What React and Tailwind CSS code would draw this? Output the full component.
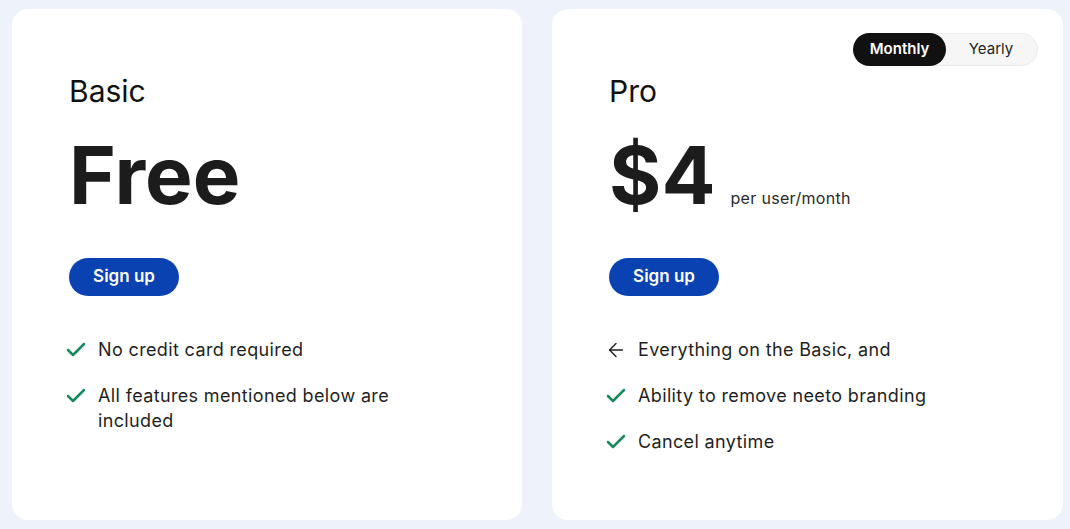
import React from 'react';
import { Check, ArrowLeft } from 'lucide-react';

const Feature = ({ icon = 'check', children }) => (
    <li className="flex items-start gap-[10px] text-[18px] leading-[25px] tracking-[0.02em] text-[#1f1f1f]">
        <span className="flex h-[25px] w-6 shrink-0 items-center justify-center">
            {icon === 'check' ? (
                <Check size={24} strokeWidth={2.5} className="text-[#168a5c]" />
            ) : (
                <ArrowLeft size={22} strokeWidth={1.5} className="text-[#1f1f1f]" />
            )}
        </span>
        <span>{children}</span>
    </li>
);

const PlanCard = ({ name, price, suffix, features, children }) => (
    <div className="relative h-[511px] rounded-2xl bg-white pl-[57px] pr-10 pt-[64px]">
        {children}
        <h2 className="text-[30px] leading-[36px] text-[#111]">{name}</h2>
        <div className="mt-[26px] flex items-baseline gap-[15px]">
            <span className="text-[80px] font-bold leading-[80px] text-[#1c1c1c]">{price}</span>
            {suffix && <span className="text-[16px] tracking-[0.02em] text-[#2a2a2a]">{suffix}</span>}
        </div>
        <button className="mt-[43px] h-[38px] w-[110px] rounded-full bg-[#0a42b2] text-[17px] font-semibold text-white">
            Sign up
        </button>
        <ul className="-ml-[5px] mt-[41px] flex flex-col gap-[21px] pr-16">
            {features.map((f, i) => (
                <Feature key={i} icon={f.icon}>{f.text}</Feature>
            ))}
        </ul>
    </div>
);

export default function App() {
    return (
        <div
            className="grid h-[529px] w-[1070px] grid-cols-[510px_511px] gap-[30px] bg-[#eef2fb] pl-3 pt-[9px]"
            style={{ fontFamily: 'Inter, "Noto Sans", sans-serif' }}
        >
            <PlanCard
                name="Basic"
                price="Free"
                features={[
                    { text: 'No credit card required' },
                    { text: 'All features mentioned below are included' },
                ]}
            />
            <PlanCard
                name="Pro"
                price="$4"
                suffix="per user/month"
                features={[
                    { icon: 'arrow', text: 'Everything on the Basic, and' },
                    { text: 'Ability to remove neeto branding' },
                    { text: 'Cancel anytime' },
                ]}
            >
                <div className="absolute right-[25px] top-[24px] flex h-[33px] w-[185px] rounded-full border border-[#ebebeb] bg-[#f6f6f6] text-[15px]">
                    <button className="-m-px h-[33px] w-[93px] rounded-full bg-[#111] font-semibold text-white">Monthly</button>
                    <button className="flex-1 text-[#1f1f1f]">Yearly</button>
                </div>
            </PlanCard>
        </div>
    );
}
